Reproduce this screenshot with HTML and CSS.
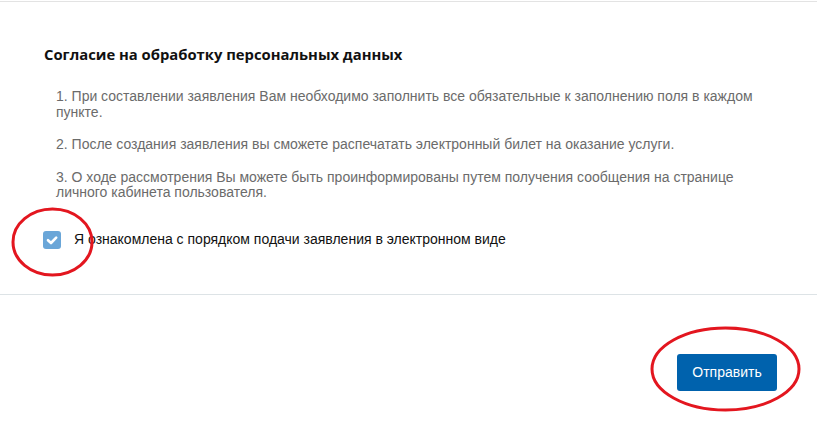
FILE: index.html
```html
<!DOCTYPE html>
<html lang="ru">
<head>
<meta charset="utf-8">
<title>Согласие</title>
<link rel="stylesheet" href="styles.css">
</head>
<body>
<div class="topline"></div>
<main class="consent">
  <h2 class="title">Согласие на обработку персональных данных</h2>
  <div class="items">
    <p>1. При составлении заявления Вам необходимо заполнить все обязательные к заполнению поля в каждом пункте.</p>
    <p>2. После создания заявления вы сможете распечатать электронный билет на оказание услуги.</p>
    <p>3. О ходе рассмотрения Вы можете быть проинформированы путем получения сообщения на странице личного кабинета пользователя.</p>
  </div>
  <label class="agree">
    <span class="box"><svg viewBox="0 0 18 18" width="18" height="18"><path d="M5 9.2 L8 12 L13.2 6.6" fill="none" stroke="#fff" stroke-width="2.6" stroke-linecap="round" stroke-linejoin="round"/></svg></span>
    <span class="agree-text">Я ознакомлена с порядком подачи заявления в электронном виде</span>
  </label>
</main>
<div class="sep"></div>
<footer class="actions">
  <button class="submit" type="button">Отправить</button>
</footer>
<svg class="marks" width="817" height="423" viewBox="0 0 817 423">
  <ellipse cx="52.5" cy="242" rx="39.5" ry="33" fill="none" stroke="#e3161f" stroke-width="3"/>
  <ellipse cx="725.5" cy="369" rx="73.5" ry="41" fill="none" stroke="#e3161f" stroke-width="3"/>
</svg>
</body>
</html>
```
FILE: styles.css
```css
html, body {
  margin: 0;
  padding: 0;
  background: #fff;
}
body {
  position: relative;
  width: 817px;
  height: 423px;
  overflow: hidden;
  font-family: "Liberation Sans", Arial, sans-serif;
  font-size: 14px;
}
.topline {
  margin-top: 1px;
  height: 1px;
  background: #e3e3e3;
}
.consent {
  padding: 44px 0 0 44px;
}
.title {
  margin: 0;
  font-family: "Open Sans", sans-serif;
  font-weight: 700;
  font-size: 14.8px;
  line-height: 17px;
  color: #111;
}
.items {
  margin-top: 26px;
  padding-left: 12px;
  width: 704px;
  color: #6b6b6b;
  line-height: 15.5px;
}
.items p {
  margin: 0 0 17px;
}
.items p:last-child {
  margin-bottom: 0;
}
.agree {
  display: flex;
  align-items: flex-start;
  gap: 13px;
  margin-top: 30px;
  margin-left: -1px;
  height: 18px;
  color: #111;
  line-height: 15.5px;
}
.agree-text {
  margin-top: 1px;
}
.box {
  width: 18px;
  height: 18px;
  border-radius: 3px;
  background: #6aa6d8;
  display: flex;
  align-items: center;
  justify-content: center;
}
.box svg {
  display: block;
}
.sep {
  margin-top: 45px;
  height: 1px;
  background: #dde3e6;
}
.actions {
  display: flex;
  justify-content: flex-end;
  padding: 59px 40px 0 0;
}
.submit {
  width: 100px;
  height: 37px;
  border: 0;
  border-radius: 3px;
  background: #0062ad;
  color: #fff;
  font-family: "Liberation Sans", Arial, sans-serif;
  font-size: 14px;
  padding: 0;
}
.marks {
  position: absolute;
  left: 0;
  top: 0;
  pointer-events: none;
}
```
